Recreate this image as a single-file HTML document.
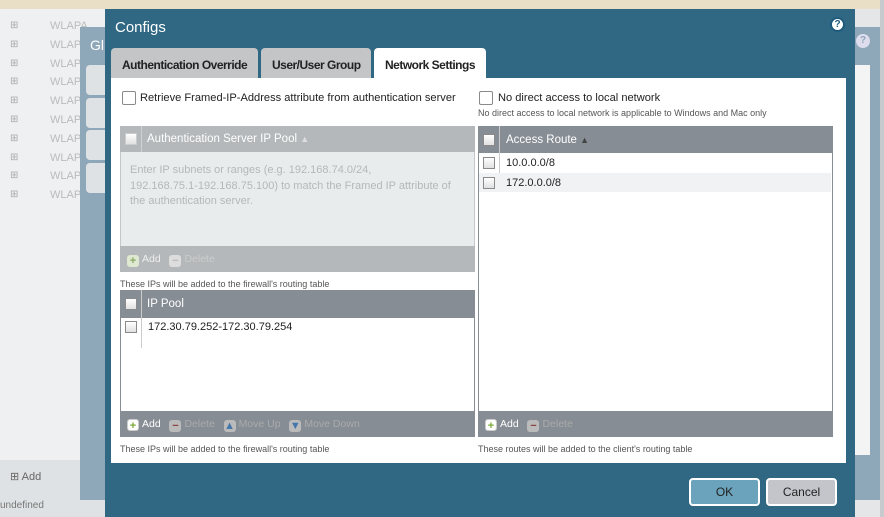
<!DOCTYPE html>
<html><head><style>
*{box-sizing:border-box;margin:0;padding:0}
body{width:884px;height:517px;overflow:hidden;position:relative;background:#e4e6e8;font-family:"Liberation Sans",sans-serif;font-size:11px;color:#333}
.abs{position:absolute;white-space:nowrap}
.cb{position:absolute;width:12px;height:12px;border:1px solid #8a8a8a;background:linear-gradient(#fff,#e0e0e0)}
.hdr{position:absolute;color:#fff;font-size:12px;white-space:nowrap}
.foot{position:absolute;color:#fff;font-size:10.5px;white-space:nowrap}
.ic{display:inline-block;width:12px;height:12px;border-radius:3px;vertical-align:-2px;margin-right:3px;text-align:center;line-height:12px;font-weight:bold;font-size:11px}
.note{position:absolute;font-size:9px;color:#555;white-space:nowrap}
.tab{position:absolute;top:48px;height:31px;background:#c3c5c7;border-radius:4px 4px 0 0;font-weight:bold;font-size:12px;padding:10px 0 0 11px;color:#222;white-space:nowrap;letter-spacing:-0.5px}
</style></head><body>
<div class="abs" style="left:0;top:0;width:884px;height:9px;background:#e9dfc6"></div>
<div class="abs" style="left:0;top:9px;width:105px;height:460px;background:#eef0f1"></div>
<div class="abs" style="left:0;top:460px;width:105px;height:57px;background:#dfe2e4"></div>
<div class="abs" style="left:10px;top:470px;color:#666">⊞ Add</div>
<div class="abs" style="left:0;top:500px;color:#777;font-size:10px">undefined</div>
<div class="abs" style="left:50px;top:17px;color:#bbb;line-height:18.8px;white-space:normal">WLAPA<br>WLAP<br>WLAP<br>WLAP<br>WLAP<br>WLAP<br>WLAP<br>WLAP<br>WLAP<br>WLAP</div>
<div class="abs" style="left:10px;top:17px;color:#aaa;line-height:18.8px;font-size:10px;white-space:normal">⊞<br>⊞<br>⊞<br>⊞<br>⊞<br>⊞<br>⊞<br>⊞<br>⊞<br>⊞</div>
<div class="abs" style="left:80px;top:27px;width:804px;height:473px;background:#8ea7b9"></div>
<div class="abs" style="left:90px;top:37px;color:#fff;font-size:14px">Gl</div>
<div class="abs" style="left:86px;top:65px;width:30px;height:30px;background:#dfe2e4;border-radius:4px"></div>
<div class="abs" style="left:86px;top:98px;width:30px;height:30px;background:#dfe2e4;border-radius:4px"></div>
<div class="abs" style="left:86px;top:130px;width:30px;height:30px;background:#dfe2e4;border-radius:4px"></div>
<div class="abs" style="left:86px;top:163px;width:30px;height:30px;background:#dfe2e4;border-radius:4px"></div>
<div class="abs" style="left:855px;top:65px;width:15px;height:390px;background:#f4f4f4"></div>
<div class="abs" style="left:856px;top:34px;width:14px;height:14px;border-radius:50%;background:#dde;color:#8ea7b9;font-size:10px;text-align:center;line-height:14px;font-weight:bold">?</div>
<div class="abs" style="left:880px;top:0;width:4px;height:517px;background:#c8cbcd"></div>
<div class="abs" style="left:105px;top:9px;width:750px;height:508px;background:#306884"></div>
<div class="abs" style="left:115px;top:19px;color:#fff;font-size:15px">Configs</div>
<div class="abs" style="left:830px;top:17px;width:15px;height:15px;border-radius:50%;background:#fff;border:2px solid #1d5a7c;color:#1d5a7c;font-size:10px;text-align:center;line-height:11px;font-weight:bold">?</div>
<div class="tab" style="left:111px;width:147px">Authentication Override</div>
<div class="tab" style="left:261px;width:110px">User/User Group</div>
<div class="tab" style="left:374px;width:112px;height:32px;background:#fff">Network Settings</div>
<div class="abs" style="left:111px;top:78px;width:735px;height:385px;background:#fff"></div>
<div class="cb" style="left:122px;top:91px;width:14px;height:14px;border-radius:2px;background:#fff"></div>
<div class="abs" style="left:140px;top:92px;font-size:11.1px;color:#222">Retrieve Framed-IP-Address attribute from authentication server</div>
<div class="abs" style="left:120px;top:126px;width:355px;height:146px;background:#e9ecec;border:1px solid #c5c8ca"></div>
<div class="abs" style="left:120px;top:126px;width:355px;height:26px;background:#b4b8bb"></div>
<div class="abs" style="left:141px;top:126px;width:1px;height:26px;background:#cfd2d4"></div>
<div class="cb" style="left:125px;top:133px;border-color:#ccc"></div>
<div class="hdr" style="left:147px;top:133px;font-size:11.5px">Authentication Server IP Pool <span style="color:#ddd;font-size:9px">▲</span></div>
<div class="abs" style="left:130px;top:163px;color:#b4b8bb;font-size:11px;line-height:15.5px">Enter IP subnets or ranges (e.g. 192.168.74.0/24,<br>192.168.75.1-192.168.75.100) to match the Framed IP attribute of<br>the authentication server.</div>
<div class="abs" style="left:120px;top:246px;width:355px;height:26px;background:#b4b8bb"></div>
<div class="foot" style="left:127px;top:253px;color:#eee"><span class="ic" style="background:#dfe8d0;color:#8a6">+</span>Add &nbsp; <span class="ic" style="background:#ddd;color:#bbb">−</span><span style="color:#ccc">Delete</span></div>
<div class="note" style="left:120px;top:279px">These IPs will be added to the firewall's routing table</div>
<div class="abs" style="left:120px;top:290px;width:355px;height:147px;background:#fff;border:1px solid #868d94"></div>
<div class="abs" style="left:120px;top:290px;width:355px;height:28px;background:#868d94"></div>
<div class="abs" style="left:141px;top:290px;width:1px;height:58px;background:#ccc"></div>
<div class="cb" style="left:125px;top:298px"></div>
<div class="hdr" style="left:147px;top:298px;font-size:11.5px">IP Pool</div>
<div class="cb" style="left:125px;top:321px"></div>
<div class="abs" style="left:148px;top:321px;font-size:11px;color:#222">172.30.79.252-172.30.79.254</div>
<div class="abs" style="left:120px;top:411px;width:355px;height:26px;background:#868d94"></div>
<div class="foot" style="left:127px;top:418px"><span class="ic" style="background:#fff;color:#7a3;border:1px solid #ccc">+</span>Add &nbsp; <span class="ic" style="background:#bbb;color:#844">−</span><span style="color:#aaa">Delete</span> &nbsp; <span class="ic" style="background:#bbb;color:#47a">▲</span><span style="color:#aaa">Move Up</span> &nbsp; <span class="ic" style="background:#bbb;color:#47a">▼</span><span style="color:#aaa">Move Down</span></div>
<div class="note" style="left:120px;top:444px">These IPs will be added to the firewall's routing table</div>
<div class="cb" style="left:479px;top:91px;width:14px;height:14px;border-radius:2px;background:#fff"></div>
<div class="abs" style="left:498px;top:92px;font-size:11.1px;color:#222">No direct access to local network</div>
<div class="note" style="left:478px;top:108px">No direct access to local network is applicable to Windows and Mac only</div>
<div class="abs" style="left:478px;top:126px;width:355px;height:311px;background:#fff;border:1px solid #868d94"></div>
<div class="abs" style="left:478px;top:126px;width:355px;height:27px;background:#868d94"></div>
<div class="abs" style="left:499px;top:126px;width:1px;height:66px;background:#ccc"></div>
<div class="abs" style="left:479px;top:173px;width:352px;height:19px;background:#f1f2f3"></div>
<div class="cb" style="left:483px;top:134px"></div>
<div class="hdr" style="left:506px;top:134px;font-size:11.5px">Access Route <span style="color:#444;font-size:9px">▲</span></div>
<div class="cb" style="left:483px;top:157px"></div>
<div class="abs" style="left:506px;top:157px;color:#222">10.0.0.0/8</div>
<div class="cb" style="left:483px;top:177px"></div>
<div class="abs" style="left:506px;top:177px;color:#222">172.0.0.0/8</div>
<div class="abs" style="left:478px;top:411px;width:355px;height:26px;background:#868d94"></div>
<div class="foot" style="left:485px;top:418px"><span class="ic" style="background:#fff;color:#7a3;border:1px solid #ccc">+</span>Add &nbsp; <span class="ic" style="background:#bbb;color:#844">−</span><span style="color:#aaa">Delete</span></div>
<div class="note" style="left:478px;top:444px">These routes will be added to the client's routing table</div>
<div class="abs" style="left:689px;top:478px;width:71px;height:28px;background:#6aa3bb;border:2px solid #fff;border-radius:4px;text-align:center;line-height:24px;color:#222;font-size:12px">OK</div>
<div class="abs" style="left:766px;top:478px;width:71px;height:28px;background:#c3c5cb;border:2px solid #fff;border-radius:4px;text-align:center;line-height:24px;color:#222;font-size:12px">Cancel</div>
</body></html>
